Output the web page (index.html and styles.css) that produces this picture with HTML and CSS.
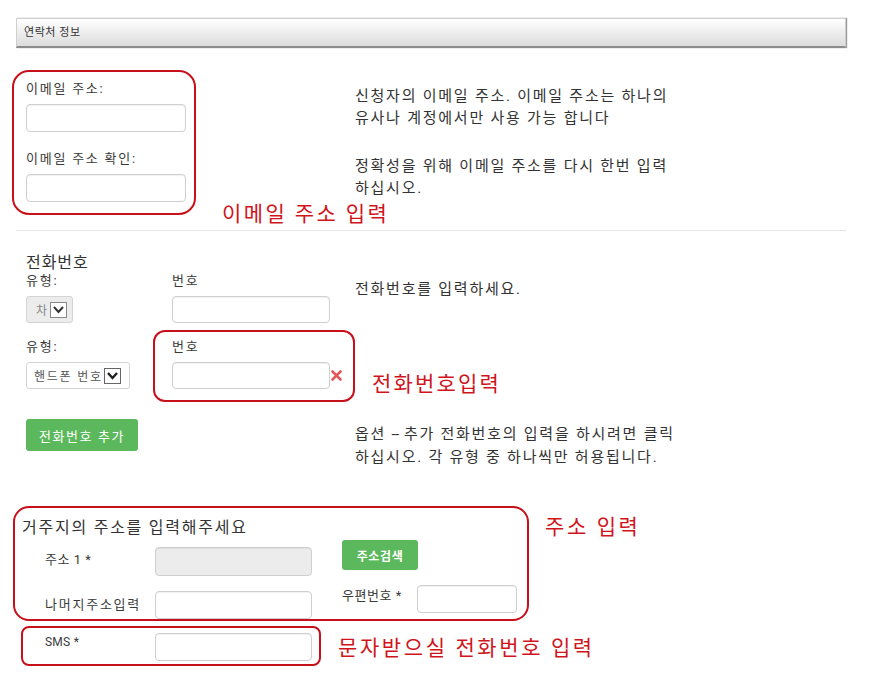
FILE: index.html
```html
<!DOCTYPE html>
<html lang="ko">
<head>
    <meta charset="UTF-8">
    <title>연락처 정보</title>
    <link rel="stylesheet" href="styles.css">
</head>
<body>

<div class="page">
    <div class="panel-head">연락처 정보</div>

    <!-- Email -->
    <div class="email">
        <div class="email-row">
            <div class="field">
                <label for="email">이메일 주소:</label>
                <input type="text" id="email" class="txt">
            </div>
            <p class="hint">신청자의 이메일 주소. 이메일 주소는 하나의<br>유사나 계정에서만 사용 가능 합니다</p>
        </div>
        <div class="email-row">
            <div class="field">
                <label for="email2">이메일 주소 확인:</label>
                <input type="text" id="email2" class="txt">
            </div>
            <p class="hint">정확성을 위해 이메일 주소를 다시 한번 입력<br>하십시오.</p>
        </div>
    </div>

    <div class="divider"></div>

    <!-- Phone -->
    <div class="phone">
        <div class="phone-title">전화번호</div>
        <div class="phone-row">
            <div class="field">
                <label>유형:</label>
                <div class="sel sel-off"><span>차</span><span class="arrow"><svg width="13" height="9" viewBox="0 0 13 9"><path d="M2 2 L6.5 7 L11 2" fill="none" stroke="#333" stroke-width="2"/></svg></span></div>
            </div>
            <div class="field">
                <label>번호</label>
                <input type="text" class="txt num">
            </div>
            <p class="hint hint-phone">전화번호를 입력하세요.</p>
        </div>
        <div class="phone-row row-b">
            <div class="field">
                <label>유형:</label>
                <div class="sel sel-mobile"><span>핸드폰 번호</span><span class="arrow"><svg width="13" height="9" viewBox="0 0 13 9"><path d="M2 2 L6.5 7 L11 2" fill="none" stroke="#222" stroke-width="2.4"/></svg></span></div>
            </div>
            <div class="field">
                <label>번호</label>
                <div class="num-line">
                    <input type="text" class="txt num">
                    <svg class="remove" width="11" height="11" viewBox="0 0 11 11"><path d="M1.5 1.5 L9.5 9.5 M9.5 1.5 L1.5 9.5" stroke="#e0585a" stroke-width="2.6" stroke-linecap="round"/></svg>
                </div>
            </div>
            <div></div>
        </div>
        <div class="phone-row row-btn">
            <div><button class="btn-green btn-add">전화번호 추가</button></div>
            <div></div>
            <p class="hint hint-btn">옵션 <span class="dash">--</span> 추가 전화번호의 입력을 하시려면 클릭<br>하십시오. 각 유형 중 하나씩만 허용됩니다.</p>
        </div>
    </div>

    <!-- Address -->
    <div class="address">
        <div class="addr-title">거주지의 주소를 입력해주세요</div>
        <div class="addr-row row-1">
            <span class="addr-label">주소 1 *</span>
            <input type="text" class="txt addr-input" disabled>
            <div><button class="btn-green btn-search">주소검색</button></div>
        </div>
        <div class="addr-row row-2">
            <span class="addr-label">나머지주소입력</span>
            <input type="text" class="txt addr-input">
            <div class="zip">
                <span class="zip-label">우편번호 *</span>
                <input type="text" class="txt zip-input">
            </div>
        </div>
        <div class="addr-row row-sms">
            <span class="addr-label sms-label">SMS *</span>
            <input type="text" class="txt addr-input">
        </div>
    </div>

    <!-- annotations drawn over the form -->
    <div class="mark mark-email"></div>
    <div class="note note-email">이메일 주소 입력</div>
    <div class="mark mark-phone"></div>
    <div class="note note-phone">전화번호입력</div>
    <div class="mark mark-addr"></div>
    <div class="note note-addr">주소 입력</div>
    <div class="mark mark-sms"></div>
    <div class="note note-sms">문자받으실 전화번호 입력</div>
</div>

</body>
</html>
```

FILE: styles.css
```css
body {
    margin: 0;
    padding: 0;
    background: #fff;
    font-family: Roboto, "Noto Sans CJK KR", sans-serif;
    color: #333;
    letter-spacing: 0.11em;
}

.page {
    position: relative;
    width: 830px;
    height: 683px;
    padding: 18px 24px 0 16px;
    overflow: hidden;
}

.panel-head {
    height: 27px;
    line-height: 27px;
    padding-left: 7px;
    font-size: 11px;
    letter-spacing: 0.05em;
    color: #333;
    background: linear-gradient(#ffffff, #dcdcdc);
    border: 1px solid #cfcfcf;
    border-bottom: 2px solid #8c8c8c;
    box-shadow: 1px 0 1px #999;
}

/* email */
.email {
    margin-top: 33px;
    padding-left: 10px;
    display: grid;
    row-gap: 19px;
}

.email-row {
    display: grid;
    grid-template-columns: 160px 1fr;
    column-gap: 169px;
}

.field label {
    display: block;
    font-size: 13px;
    line-height: 16px;
    margin-bottom: 7px;
    color: #3a3a3a;
}

.txt {
    display: block;
    box-sizing: border-box;
    width: 160px;
    height: 28px;
    margin: 0;
    border: 1px solid #cfcfcf;
    border-radius: 4px;
    background: #fff;
    box-shadow: inset 0 1px 1px rgba(0, 0, 0, 0.06);
}

.hint {
    margin: 0;
    padding-top: 4px;
    font-size: 15px;
    line-height: 22px;
    color: #333;
}

.divider {
    margin-top: 28px;
    border-top: 1px solid #e6e6e6;
}

/* phone */
.phone {
    padding-left: 10px;
}

.phone-title {
    margin-top: 22px;
    font-size: 16px;
    line-height: 20px;
    letter-spacing: 0.06em;
    color: #333;
}

.phone-row {
    display: grid;
    grid-template-columns: 146px 183px 1fr;
}

.row-b {
    margin-top: 16px;
}

.row-btn {
    margin-top: 30px;
}

.hint-phone {
    padding-top: 5px;
}

.hint-btn {
    line-height: 23px;
}

.dash {
    letter-spacing: -0.05em;
}

.num {
    width: 158px;
    height: 27px;
}

.num-line {
    display: flex;
    align-items: center;
}

.remove {
    margin-left: 1px;
}

.sel {
    box-sizing: border-box;
    height: 27px;
    display: flex;
    align-items: center;
    border: 1px solid #d4d4d4;
    border-radius: 3px;
    font-size: 12px;
}

.sel-off {
    width: 47px;
    background: #ececec;
    color: #888;
    padding-left: 9px;
}

.sel-mobile {
    width: 104px;
    background: #fff;
    color: #555;
    padding-left: 7px;
}

.sel .arrow {
    box-sizing: border-box;
    width: 17px;
    height: 16px;
    margin-left: 1px;
    border: 1px solid #666;
    background: #fff;
    display: flex;
    align-items: center;
    justify-content: center;
}

.sel-off .arrow {
    border-color: #888;
}

.btn-green {
    background: #5cb85c;
    color: #fff;
    border: none;
    border-radius: 3px;
    font-family: Roboto, "Noto Sans CJK KR", sans-serif;
    font-size: 13px;
    letter-spacing: 0.12em;
    cursor: pointer;
}

.btn-add {
    width: 112px;
    height: 32px;
}

.btn-search {
    width: 76px;
    height: 30px;
    font-weight: bold;
    font-size: 12px;
    letter-spacing: 0.05em;
}

/* address */
.address {
    margin-top: 49px;
}

.addr-title {
    padding-left: 6px;
    font-size: 16px;
    line-height: 20px;
    color: #333;
}

.addr-row {
    display: grid;
    grid-template-columns: 110px 187px 1fr;
    padding-left: 29px;
    align-items: start;
}

.addr-row .addr-input {
    width: 157px;
}

.row-1 {
    margin-top: 2px;
}

.row-1 .addr-label {
    margin-top: 5px;
    line-height: 29px;
    letter-spacing: 0.04em;
}

.row-1 .addr-input {
    margin-top: 7px;
    height: 29px;
    background: #ececec;
}

.row-2 {
    margin-top: 9px;
}

.row-2 .addr-label {
    margin-top: 6px;
    line-height: 28px;
}

.row-2 .addr-input {
    margin-top: 6px;
}

.row-sms {
    margin-top: 14px;
}

.addr-label {
    font-size: 13px;
    color: #3a3a3a;
}

.sms-label {
    line-height: 18px;
    font-size: 12px;
    letter-spacing: 0.02em;
}

.zip {
    display: flex;
    align-items: flex-start;
}

.zip-label {
    width: 75px;
    font-size: 13px;
    line-height: 22px;
    letter-spacing: 0.04em;
    color: #3a3a3a;
}

.zip-input {
    width: 100px;
}

/* annotations */
.mark {
    position: absolute;
    box-sizing: border-box;
    border: 2px solid #c8101a;
}

.mark-email {
    left: 12px;
    top: 70px;
    width: 184px;
    height: 145px;
    border-radius: 17px;
}

.mark-phone {
    left: 153px;
    top: 330px;
    width: 202px;
    height: 72px;
    border-radius: 12px;
}

.mark-addr {
    left: 13px;
    top: 506px;
    width: 516px;
    height: 115px;
    border-radius: 16px;
}

.mark-sms {
    left: 21px;
    top: 626px;
    width: 300px;
    height: 40px;
    border-radius: 8px;
}

.note {
    position: absolute;
    font-size: 21px;
    line-height: 24px;
    color: #d0141c;
    white-space: nowrap;
}

.note-email {
    left: 222px;
    top: 202px;
    letter-spacing: 2.4px;
}

.note-phone {
    left: 372px;
    top: 372px;
    letter-spacing: 2.2px;
}

.note-addr {
    left: 545px;
    top: 515px;
    letter-spacing: 2.6px;
}

.note-sms {
    left: 338px;
    top: 636px;
    letter-spacing: 2.6px;
}
```
